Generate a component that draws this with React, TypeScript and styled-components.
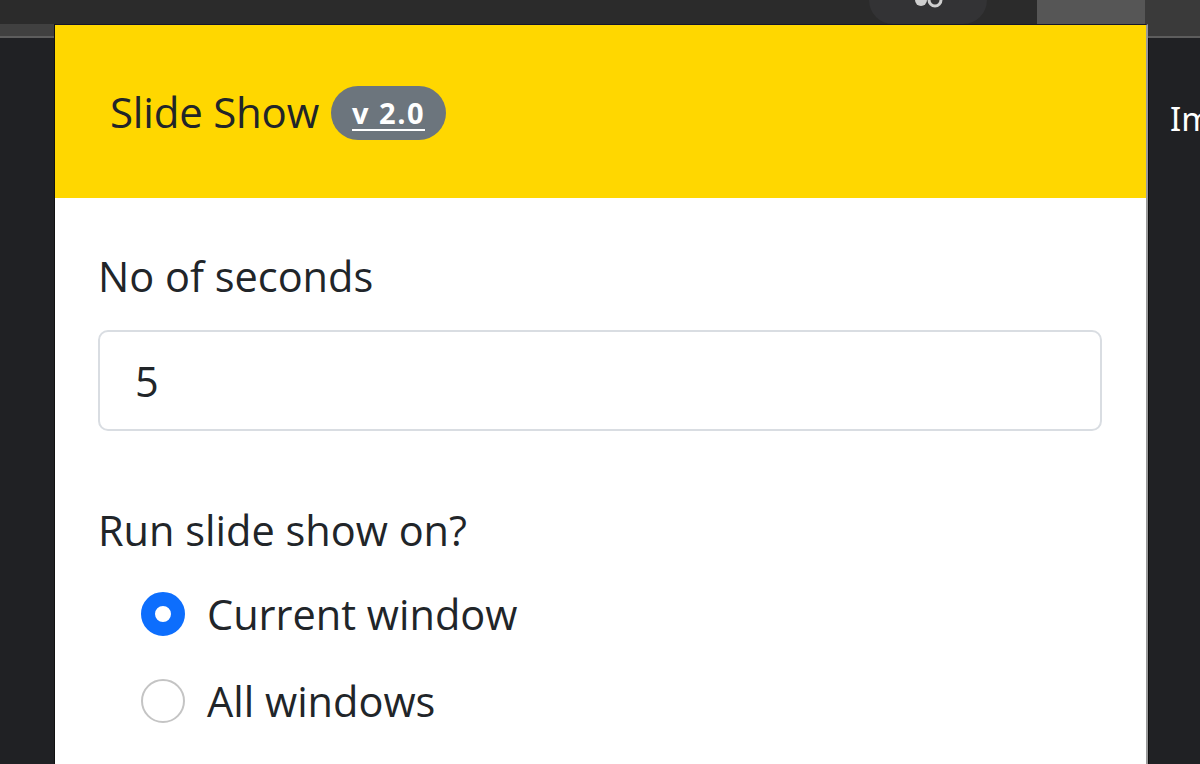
import styled, { createGlobalStyle } from 'styled-components';

const GlobalStyle = createGlobalStyle`
  html, body {
    margin: 0;
    padding: 0;
    background: #202124;
    overflow: hidden;
  }
  body {
    font-family: 'Open Sans', 'Noto Sans', sans-serif;
  }
`;

const Screen = styled.div`
  width: 1200px;
  height: 764px;
  display: flex;
  flex-direction: column;
  background: #202124;
  overflow: hidden;
`;

const TopBar = styled.div`
  height: 24px;
  flex-shrink: 0;
  display: flex;
  background: #2b2b2b;
`;

const TopBarSpacer = styled.div`
  flex: 1;
`;

const PinnedButton = styled.div`
  width: 118px;
  height: 24px;
  margin-right: 50px;
  background: #333335;
  border-radius: 0 0 48px 48px;
  display: flex;
  justify-content: center;
  align-items: flex-end;
  padding-bottom: 14px;
  box-sizing: border-box;
`;

const TabBlock = styled.div`
  width: 108px;
  height: 24px;
  background: #565656;
`;

const RightCorner = styled.div`
  width: 55px;
  height: 24px;
  background: #3a3a3a;
`;

const Body = styled.div`
  flex: 1;
  display: flex;
  min-height: 0;
`;

const Gutter = styled.div<{ $width: number }>`
  width: ${(p) => p.$width}px;
  flex-shrink: 0;
  display: flex;
  flex-direction: column;
  overflow: hidden;
`;

const GutterBand = styled.div<{ $tone: string }>`
  height: 12px;
  background: ${(p) => p.$tone};
  border-bottom: 2px solid #5d5d5d;
`;

const PeekText = styled.div`
  margin-top: 58px;
  padding-left: 22px;
  font-family: 'Noto Sans', 'Open Sans', sans-serif;
  font-size: 33px;
  color: #ffffff;
  white-space: nowrap;
`;

const Popup = styled.div`
  flex: 1;
  display: flex;
  flex-direction: column;
  background: #ffffff;
  border-top: 1px solid #15152a;
  border-left: 1px solid #111;
  border-right: 2px solid #9a9a9a;
  box-shadow: 1px 0 0 #111;
`;

const Header = styled.div`
  height: 173px;
  background: #ffd700;
  display: flex;
  align-items: center;
  padding-left: 55px;
  gap: 12px;
`;

const Title = styled.span`
  font-size: 42px;
  color: #212529;
  letter-spacing: -0.2px;
`;

const VersionBadge = styled.a`
  display: inline-flex;
  align-items: center;
  height: 54px;
  padding: 0 21px;
  border-radius: 27px;
  background: #6c757d;
  color: #ffffff;
  font-size: 29px;
  font-weight: 700;
  letter-spacing: 1.5px;
  text-decoration: underline;
  text-underline-offset: 5px;
  margin-top: 2px;
`;

const Content = styled.div`
  padding: 50px 44px 0 43px;
  display: flex;
  flex-direction: column;
`;

const Label = styled.div`
  font-size: 41.5px;
  color: #212529;
  line-height: 56px;
`;

const NumberInput = styled.input`
  margin-top: 26px;
  height: 101px;
  box-sizing: border-box;
  border: 2px solid #d9dde2;
  border-radius: 10px;
  padding: 0 35px;
  font-family: inherit;
  font-size: 41.5px;
  color: #212529;
  outline: none;
  width: 100%;
`;

const Section = styled.div`
  margin-top: 71px;
  display: flex;
  flex-direction: column;
`;

const RadioList = styled.div`
  margin-top: 28px;
  padding-left: 43px;
  display: flex;
  flex-direction: column;
  gap: 31px;
`;

const RadioRow = styled.label`
  display: flex;
  align-items: center;
  gap: 22px;
  font-size: 41.5px;
  color: #212529;
  line-height: 56px;
`;

const RadioDot = styled.span<{ $checked?: boolean }>`
  width: 44px;
  height: 44px;
  border-radius: 50%;
  box-sizing: border-box;
  flex-shrink: 0;
  background: #ffffff;
  border: ${(p) => (p.$checked ? '14px solid #0d6efd' : '2px solid #c4c4c4')};
`;

export default function App() {
  return (
    <Screen>
      <GlobalStyle />
      <TopBar>
        <TopBarSpacer />
        <PinnedButton>
          <svg width="30" height="12" viewBox="0 0 30 12">
            <circle cx="8" cy="2" r="6" fill="#cfcfcf" />
            <circle cx="22" cy="2" r="6" fill="none" stroke="#cfcfcf" strokeWidth="3" />
          </svg>
        </PinnedButton>
        <TabBlock />
        <RightCorner />
      </TopBar>
      <Body>
        <Gutter $width={54}>
          <GutterBand $tone="#404040" />
        </Gutter>
        <Popup>
          <Header>
            <Title>Slide Show</Title>
            <VersionBadge>v 2.0</VersionBadge>
          </Header>
          <Content>
            <Label>No of seconds</Label>
            <NumberInput type="text" defaultValue="5" />
            <Section>
              <Label>Run slide show on?</Label>
              <RadioList>
                <RadioRow>
                  <RadioDot $checked />
                  Current window
                </RadioRow>
                <RadioRow>
                  <RadioDot />
                  All windows
                </RadioRow>
              </RadioList>
            </Section>
          </Content>
        </Popup>
        <Gutter $width={52}>
          <GutterBand $tone="#3a3a3a" />
          <PeekText>Im</PeekText>
        </Gutter>
      </Body>
    </Screen>
  );
}
